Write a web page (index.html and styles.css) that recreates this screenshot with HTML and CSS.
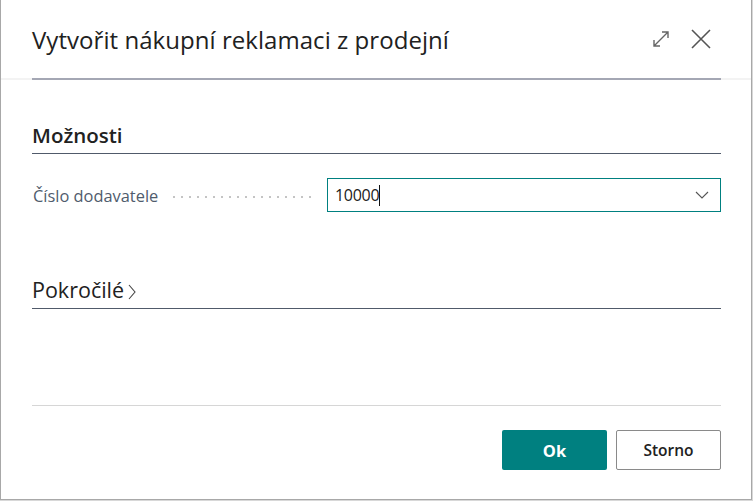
FILE: index.html
```html
<!DOCTYPE html>
<html lang="cs">
<head>
<meta charset="utf-8">
<link rel="stylesheet" href="styles.css">
</head>
<body>
<div class="dialog">
  <div class="header">
    <div class="header-inner">
      <h1 class="title">Vytvořit nákupní reklamaci z prodejní</h1>
      <div class="header-actions">
        <svg class="icon-expand" width="20" height="20" viewBox="0 0 20 20"><path d="M3 17 L17 3 M11 3 H17 V9 M3 11 V17 H9" fill="none" stroke="#666" stroke-width="1.4"/></svg>
        <svg class="icon-close" width="22" height="22" viewBox="0 0 22 22"><path d="M2 2 L20 20 M20 2 L2 20" fill="none" stroke="#555" stroke-width="1.6"/></svg>
      </div>
    </div>
  </div>
  <div class="body">
    <section class="group">
      <h2 class="group-title">Možnosti</h2>
      <div class="field">
        <div class="field-caption">
          <label class="field-label">Číslo dodavatele</label>
          <span class="dots"></span>
        </div>
        <div class="input">
          <span class="input-value">10000</span><span class="caret"></span>
          <svg class="chev" width="14" height="8" viewBox="0 0 14 8"><path d="M1 1 L7 7 L13 1" fill="none" stroke="#555" stroke-width="1.1"/></svg>
        </div>
      </div>
    </section>
    <section class="group group-adv">
      <h2 class="group-title">Pokročilé<svg class="chev-right" width="10" height="18" viewBox="0 0 10 18"><path d="M2 2 L8 9 L2 16" fill="none" stroke="#444" stroke-width="1.1"/></svg></h2>
    </section>
  </div>
  <div class="footer">
    <button class="btn btn-primary">Ok</button>
    <button class="btn btn-secondary">Storno</button>
  </div>
</div>
</body>
</html>
```
FILE: styles.css
```css
* { box-sizing: border-box; }
html, body { margin: 0; padding: 0; }
body {
  background: #d8d8d8;
  font-family: "Open Sans", "Noto Sans", sans-serif;
  width: 753px;
  height: 501px;
  overflow: hidden;
}
.dialog {
  width: 752px;
  height: 500px;
  background: #fff;
  border: 1px solid #a8a8a8;
  border-top: none;
  display: flex;
  flex-direction: column;
}
.header {
  height: 80px;
  flex: none;
  background: linear-gradient(to top, #f3f3f3 2px, #fff 2px);
}
.header-inner {
  margin: 0 30px 0 31px;
  height: 80px;
  border-bottom: 2px solid #a4a7b4;
  display: flex;
  align-items: center;
  justify-content: space-between;
}
.title {
  margin: 0;
  font-weight: 400;
  font-size: 24px;
  line-height: 32px;
  color: #212121;
  letter-spacing: 0.05px;
  padding-top: 2px;
}
.header-actions {
  display: flex;
  align-items: center;
  gap: 19px;
  padding-right: 9px;
}
.body {
  flex: 1;
  padding: 0 30px 0 31px;
}
.group-title {
  margin: 0;
  font-size: 20.5px;
  line-height: 26px;
  font-weight: 600;
  color: #212121;
  border-bottom: 1px solid #505a6a;
  padding-bottom: 5px;
  display: flex;
  align-items: center;
}
.group { padding-top: 42px; }
.group-adv { padding-top: 65px; }
.group-adv .group-title { font-weight: 400; font-size: 21.5px; }
.chev-right { margin-left: 3px; margin-top: 3px; }
.field {
  display: flex;
  align-items: center;
  margin-top: 24px;
  height: 34px;
}
.field-caption {
  width: 295px;
  flex: none;
  display: flex;
  align-items: center;
}
.field-label {
  font-size: 16.4px;
  color: #505c6d;
  padding-left: 1px;
  white-space: nowrap;
}
.dots {
  flex: 1;
  margin-left: 12px;
  margin-right: 15px;
  height: 2px;
  background-image: radial-gradient(circle, #c4c4c4 0.8px, transparent 1.1px);
  background-size: 8px 2px;
  background-position: 0 0;
  margin-top: 3px;
}
.input {
  flex: 1;
  height: 34px;
  border: 1px solid #008080;
  display: flex;
  align-items: center;
  padding: 0 11px 0 7px;
}
.input-value {
  font-size: 16px;
  color: #212121;
  letter-spacing: -0.3px;
}
.caret {
  width: 1px;
  height: 21px;
  background: #111;
}
.chev { margin-left: auto; }
.footer {
  flex: none;
  margin: 0 30px 0 31px;
  border-top: 1px solid #d6d6d6;
  height: 94px;
  display: flex;
  justify-content: flex-end;
  align-items: flex-start;
  padding-top: 24px;
  gap: 9px;
}
.btn {
  width: 105px;
  height: 40px;
  border-radius: 2px;
  font-family: "Open Sans", "Noto Sans", sans-serif;
  cursor: pointer;
  padding: 0;
}
.btn-primary {
  background: #008080;
  color: #fff;
  border: none;
  font-weight: 700;
  font-size: 16.5px;
}
.btn-secondary {
  background: #fff;
  border: 1px solid #8a8a8a;
  color: #212121;
  font-weight: 600;
  font-size: 15.5px;
}
```
